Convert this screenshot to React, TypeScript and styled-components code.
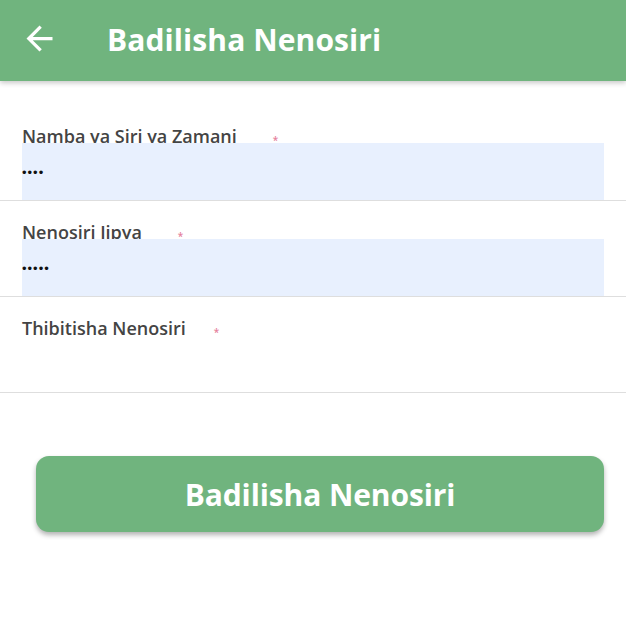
import React from "react";
import styled, { createGlobalStyle } from "styled-components";

const Global = createGlobalStyle`
  html, body { margin: 0; padding: 0; background: #ffffff; }
  body { font-family: "Open Sans", sans-serif; }
  * { box-sizing: border-box; }
`;

const Page = styled.div`
  width: 626px;
  min-height: 626px;
  background: #fff;
`;

const Header = styled.header`
  height: 81px;
  background: #70b47e;
  display: flex;
  align-items: center;
  padding-left: 19px;
  box-shadow: 0 2px 5px rgba(0, 0, 0, 0.22);
  position: relative;
  z-index: 1;
`;

const BackButton = styled.button`
  width: 40px;
  height: 40px;
  padding: 0;
  border: none;
  background: transparent;
  display: flex;
  align-items: center;
  justify-content: center;
  margin-top: -4px;
  cursor: pointer;
`;

const Title = styled.h1`
  margin: -3px 0 0 48px;
  font-family: "Open Sans", sans-serif;
  font-weight: 700;
  font-size: 30px;
  letter-spacing: 0.1px;
  color: #fff;
`;

const Form = styled.form`
  padding-top: 24px;
`;

const Row = styled.div`
  padding-top: 21px;
  border-bottom: 1px solid #dedede;
`;

const Label = styled.label`
  display: flex;
  align-items: flex-start;
  height: 17px;
  padding-left: 22px;
  font-family: "Open Sans", sans-serif;
  font-weight: 600;
  font-size: 18px;
  line-height: 21px;
  color: #444;
`;

const Required = styled.span<{ $gap: number }>`
  color: #e5819c;
  font-size: 10px;
  line-height: 10px;
  margin-left: ${(p) => p.$gap}px;
  margin-top: 9px;
`;

const Field = styled.input<{ $filled: boolean }>`
  position: relative;
  display: block;
  width: 582px;
  height: 57px;
  margin-left: 22px;
  padding: 2px 0 0;
  border: none;
  outline: none;
  background: ${(p) => (p.$filled ? "#e8f0fe" : "transparent")};
  font-family: "Liberation Sans", Arial, sans-serif;
  font-size: 13px;
  letter-spacing: 1px;
  color: #111;
`;

const ButtonWrap = styled.div`
  padding: 63px 22px 0 36px;
`;

const Submit = styled.button`
  width: 568px;
  height: 76px;
  border: none;
  border-radius: 13px;
  background: #70b47e;
  color: #fff;
  font-family: "Open Sans", sans-serif;
  font-weight: 700;
  font-size: 30px;
  letter-spacing: -0.1px;
  box-shadow: 0 3px 5px rgba(0, 0, 0, 0.3);
  cursor: pointer;
`;

const fields = [
  { label: "Namba ya Siri ya Zamani", value: "1234", gap: 36 },
  { label: "Nenosiri Jipya", value: "12345", gap: 36 },
  { label: "Thibitisha Nenosiri", value: "", gap: 28 },
];

export default function App() {
  return (
    <Page>
      <Global />
      <Header>
        <BackButton aria-label="back">
          <svg width="39" height="39" viewBox="0 0 24 24" fill="#fff">
            <path d="M20 11H7.83l5.59-5.59L12 4l-8 8 8 8 1.41-1.41L7.83 13H20v-2z" />
          </svg>
        </BackButton>
        <Title>Badilisha Nenosiri</Title>
      </Header>
      <Form onSubmit={(e) => e.preventDefault()}>
        {fields.map((f) => (
          <Row key={f.label}>
            <Label>
              {f.label}
              <Required $gap={f.gap}>*</Required>
            </Label>
            <Field type="password" readOnly value={f.value} $filled={f.value !== ""} />
          </Row>
        ))}
        <ButtonWrap>
          <Submit type="submit">Badilisha Nenosiri</Submit>
        </ButtonWrap>
      </Form>
    </Page>
  );
}
